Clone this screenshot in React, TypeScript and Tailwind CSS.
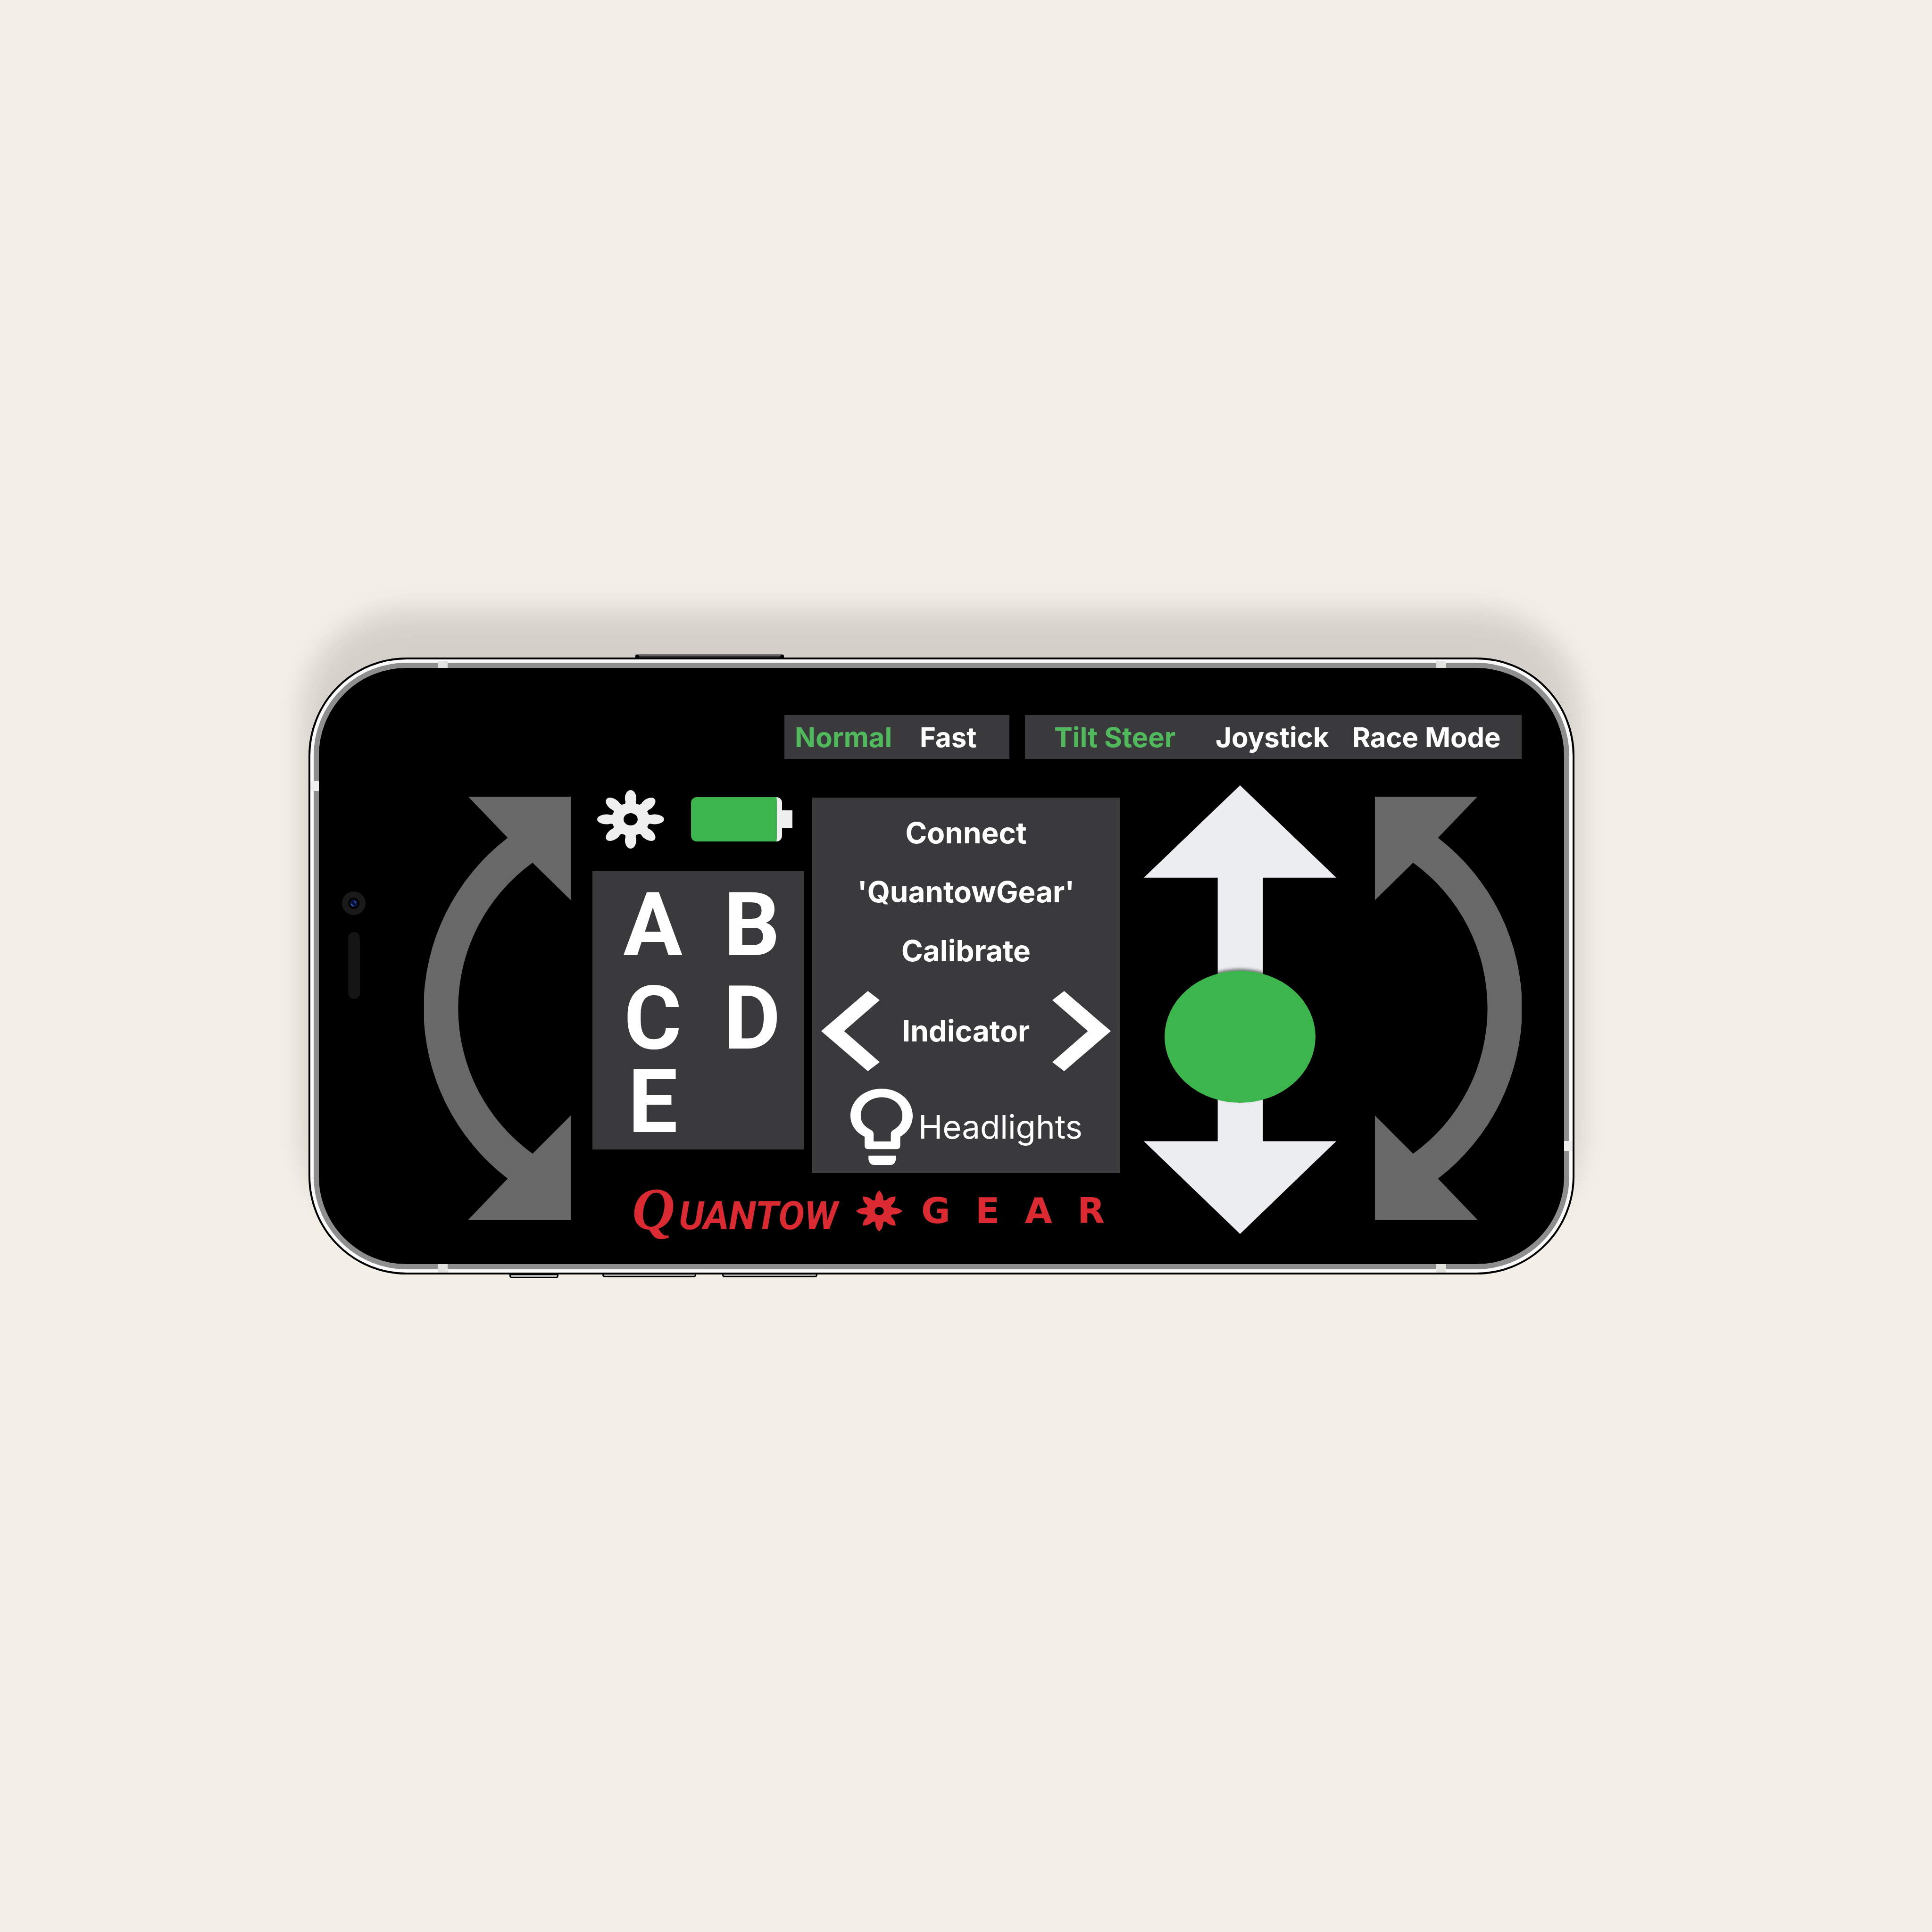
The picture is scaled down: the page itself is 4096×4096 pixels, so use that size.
import { useState } from "react";

const TEETH = [0, 45, 90, 135, 180, 225, 270, 315];

function Gear({ className, tooth, body, hole }: { className: string; tooth: string; body: number; hole: number }) {
  return (
    <svg viewBox="-100 -100 200 200" preserveAspectRatio="none" className={className} fill="currentColor" aria-hidden="true">
      {TEETH.map((a) => (
        <path key={a} d={tooth} transform={`rotate(${a})`} />
      ))}
      <circle r={(body + hole) / 2} fill="none" stroke="currentColor" strokeWidth={body - hole} />
    </svg>
  );
}

function CurvedArrow({ className }: { className: string }) {
  return (
    <svg viewBox="0 0 342 986" preserveAspectRatio="none" className={className} fill="#686868" aria-hidden="true">
      <path d="M103 0H342V241L253 154A418 418 0 0 0 253 832L342 743V986H103L195 890A500 500 0 0 1 195 96Z" />
    </svg>
  );
}

function Chevron({ className }: { className: string }) {
  return (
    <svg viewBox="0 0 138 186" preserveAspectRatio="none" className={className} fill="#fff" aria-hidden="true">
      <path d="M0 93L110 0L138 21L54 93L138 165L110 186Z" />
    </svg>
  );
}

function Bulb() {
  return (
    <svg viewBox="0 0 145 178" preserveAspectRatio="none" className="h-[162px] w-[132px] shrink-0" fill="#fff" aria-hidden="true">
      <path
        fillRule="evenodd"
        d="M33 112C12 102 0 84 0 63C0 28 32 0 73 0C113 0 145 28 145 63C145 84 134 102 116 112V133Q116 141 108 141H41Q33 141 33 133ZM54 123V106Q54 100 49 97C33 89 24 79 24 63C24 38 46 20 73 20C100 20 121 38 121 63C121 79 113 89 99 97Q94 100 94 106V123Z"
      />
      <path d="M42 156H106V164Q104 178 92 178H56Q44 178 42 164Z" />
    </svg>
  );
}

function Mode({ label, active, className, onClick }: { label: string; active: boolean; className: string; onClick: () => void }) {
  return (
    <button
      type="button"
      aria-pressed={active}
      onClick={onClick}
      className={`${className} whitespace-nowrap text-left text-[58px] leading-none font-bold ${active ? "text-[#4fb95b]" : "text-white"}`}
    >
      {label}
    </button>
  );
}

export default function App() {
  const [speed, setSpeed] = useState("Normal");
  const [steer, setSteer] = useState("Tilt Steer");
  const [throttle, setThrottle] = useState(414);

  return (
    <main className="flex min-h-screen items-center justify-center bg-[#f4efe7] pr-[104px] font-['Inter',sans-serif]">
      <div className="relative w-full max-w-[2684px]">
        {/* side buttons */}
        <div className="absolute -top-[7px] left-[693px] h-[10px] w-[315px] rounded-t-[4px] border-x-[8px] border-t-[3px] border-x-black border-t-[#858585] bg-[#3a3a3a]" />
        <div className="absolute -bottom-[8px] left-[426px] h-[10px] w-[104px] rounded-b-[5px] border-[3px] border-black bg-[#b5b5b5]" />
        <div className="absolute -bottom-[6px] left-[623px] h-[9px] w-[199px] rounded-b-[5px] border-[3px] border-black bg-[#b5b5b5]" />
        <div className="absolute -bottom-[6px] left-[877px] h-[9px] w-[202px] rounded-b-[5px] border-[3px] border-black bg-[#b5b5b5]" />

        <div className="relative rounded-[208px] border-[4px] border-black bg-[#fbfbfb] p-[7px] shadow-[0_-88px_64px_12px_rgba(0,0,0,0.13)]">
          {/* antenna bands */}
          <div className="absolute top-[4px] left-[270px] z-10 h-[14px] w-[21px] bg-[#e2e3df]" />
          <div className="absolute top-[4px] right-[268px] z-10 h-[14px] w-[21px] bg-[#e2e3df]" />
          <div className="absolute bottom-0 left-[270px] z-10 h-[18px] w-[21px] bg-[#e2e3df]" />
          <div className="absolute right-[268px] bottom-0 z-10 h-[18px] w-[21px] bg-[#e2e3df]" />
          <div className="absolute top-[258px] left-0 z-10 h-[21px] w-[18px] bg-[#eff0ed]" />
          <div className="absolute right-0 bottom-[258px] z-10 h-[21px] w-[18px] bg-[#eff0ed]" />

          <div className="relative rounded-[197px] border-[11px] border-[#8e8e8e] bg-black pt-[100px] pr-[90px] pb-[64px] pl-[223px]">
            {/* camera and speaker */}
            <div className="absolute top-[474px] left-[49px] flex w-[50px] flex-col items-center gap-[36px]">
              <svg viewBox="-25 -25 50 50" className="h-[50px] w-[50px]" aria-hidden="true">
                <circle r="25" fill="#1a1a1b" />
                <circle r="12" fill="#020205" />
                <circle r="7" fill="#07103a" stroke="#1d2f6b" strokeWidth="1" />
                <path d="M-5 1A6 6 0 0 0 0 6M1 -4A5 5 0 0 1 4 0" fill="none" stroke="#2f62c4" strokeWidth="2" />
              </svg>
              <div className="h-[142px] w-[25px] rounded-full bg-[#151515]" />
            </div>

            <header className="flex h-[93px] justify-end gap-[33px]">
              <div className="flex w-[477px] items-center bg-[#3a393c] pl-[22px]">
                <Mode label="Normal" className="w-[265px]" active={speed === "Normal"} onClick={() => setSpeed("Normal")} />
                <Mode label="Fast" className="" active={speed === "Fast"} onClick={() => setSpeed("Fast")} />
              </div>
              <div className="flex w-[1053px] items-center bg-[#3a393c] pl-[62px]">
                <Mode label="Tilt Steer" className="w-[342px]" active={steer === "Tilt Steer"} onClick={() => setSteer("Tilt Steer")} />
                <Mode label="Joystick" className="w-[290px]" active={steer === "Joystick"} onClick={() => setSteer("Joystick")} />
                <Mode label="Race Mode" className="" active={steer === "Race Mode"} onClick={() => setSteer("Race Mode")} />
              </div>
            </header>

            <div className="mt-[56px] flex items-start justify-between">
              <button type="button" aria-label="Turn left" className="mt-[24px]">
                <CurvedArrow className="h-[897px] w-[311px]" />
              </button>

              <div className="-mr-[5px] flex flex-col">
                <div className="flex items-start gap-[18px]">
                  <div className="mt-[10px] flex w-[448px] flex-col gap-[48px]">
                    <div className="flex items-center gap-[57px] pl-[10px]">
                      <button type="button" aria-label="Settings" className="text-[#efefef]">
                        <Gear
                          className="h-[124px] w-[142px]"
                          tooth="M-30 -44Q-15 -50 -15 -60C-21 -76 -13 -100 0 -100C13 -100 21 -76 15 -60Q15 -50 30 -44Z"
                          body={56}
                          hole={21}
                        />
                      </button>
                      <div className="flex items-center" role="img" aria-label="Battery">
                        <div className="h-[94px] w-[193px] overflow-hidden rounded-[12px] border-r-[11px] border-[#efefef] bg-[#3cb54c]" />
                        <div className="h-[38px] w-[22px] bg-[#efefef]" />
                      </div>
                    </div>
                    <div className="grid h-[590px] grid-cols-[212px_208px] grid-rows-[214px_182px_172px] bg-[#3a393c] pt-[8px] pl-[22px] font-['Roboto',sans-serif] text-[187px] leading-[160px] font-bold text-white">
                      {["A", "B", "C", "D", "E"].map((c) => (
                        <button key={c} type="button" className="flex items-center justify-center">
                          {c}
                        </button>
                      ))}
                    </div>
                  </div>

                  <div className="mt-[26px] flex h-[796px] w-[652px] flex-col bg-[#3a393c] pt-[12px] text-[62px] leading-none font-bold text-white">
                    <button type="button" className="h-[125px]">Connect</button>
                    <button type="button" className="h-[125px]">'QuantowGear'</button>
                    <button type="button" className="h-[125px]">Calibrate</button>
                    <div className="flex h-[216px] items-center justify-between px-[19px]">
                      <button type="button" aria-label="Indicate left">
                        <Chevron className="h-[170px] w-[124px]" />
                      </button>
                      <span>Indicator</span>
                      <button type="button" aria-label="Indicate right">
                        <Chevron className="h-[170px] w-[124px] -scale-x-100" />
                      </button>
                    </div>
                    <button type="button" className="flex h-[190px] items-center gap-[12px] pl-[81px] text-[69px] font-normal">
                      <Bulb />
                      Headlights
                    </button>
                  </div>
                </div>

                <div className="mt-[32px] mr-[32px] ml-[84px] flex h-[96px] items-center justify-between text-[#dc2a33]">
                  <div className="flex items-baseline gap-[8px] leading-none">
                    <span className="font-['Liberation_Serif',serif] text-[126px] leading-[96px] font-bold italic">Q</span>
                    <span className="font-['Roboto',sans-serif] text-[83px] leading-[80px] font-bold italic">UANTOW</span>
                  </div>
                  <Gear
                    className="h-[87px] w-[98px]"
                    tooth="M-26 -40L-16 -60C-18 -78 -8 -92 0 -100C8 -92 18 -78 16 -60L26 -40Z"
                    body={54}
                    hole={20}
                  />
                  <div className="flex w-[389px] justify-between font-['DejaVu_Sans',sans-serif] text-[75px] leading-none font-bold">
                    <span>G</span>
                    <span>E</span>
                    <span>A</span>
                    <span>R</span>
                  </div>
                </div>
              </div>

              <div className="ml-[10px] grid justify-items-center">
                <svg viewBox="0 0 448 1045" preserveAspectRatio="none" className="col-start-1 row-start-1 h-[951px] w-[408px]" fill="#ecedf1" aria-hidden="true">
                  <path d="M224 0L448 215H277V829H448L224 1045L0 829H172V215H0Z" />
                </svg>
                <input
                  type="range"
                  aria-label="Throttle"
                  min={0}
                  max={1000}
                  value={throttle}
                  onChange={(e) => setThrottle(Number(e.target.value))}
                  className="col-start-1 row-start-1 h-[951px] w-[320px] appearance-none bg-transparent [direction:rtl] [writing-mode:vertical-lr] [&::-webkit-slider-thumb]:h-[280px] [&::-webkit-slider-thumb]:w-[320px] [&::-webkit-slider-thumb]:appearance-none [&::-webkit-slider-thumb]:rounded-[50%] [&::-webkit-slider-thumb]:bg-[#3cb54c] [&::-webkit-slider-thumb]:shadow-[0_-4px_6px_rgba(0,0,0,0.5)]"
                />
              </div>

              <button type="button" aria-label="Turn right" className="mt-[24px] ml-[36px]">
                <CurvedArrow className="h-[897px] w-[311px] -scale-x-100" />
              </button>
            </div>
          </div>
        </div>
      </div>
    </main>
  );
}
